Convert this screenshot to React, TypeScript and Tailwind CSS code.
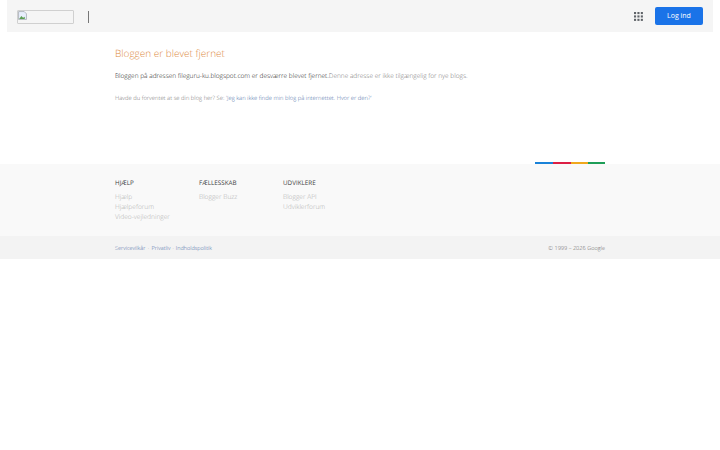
import React from "react";

const GridIcon = () => (
  <svg width="9" height="9" viewBox="0 0 9 9" fill="#5f6368">
    {[0, 3.4, 6.8].map((y) =>
      [0, 3.4, 6.8].map((x) => <rect key={`${x}-${y}`} x={x} y={y} width="2.1" height="2.1" />)
    )}
  </svg>
);

const BrokenImage = () => (
  <svg width="9" height="9" viewBox="0 0 8 8" className="absolute left-0 top-0">
    <path d="M0.5 0.5H5.5L7.5 2.5V7.5H0.5Z" fill="#e8eefc" stroke="#9aa0a6" strokeWidth="0.6" />
    <path d="M1 7L3 4.5L4.5 6L6 5V7Z" fill="#5c9e52" />
  </svg>
);

const FooterCol = ({ title, links, width }: { title: string; links: string[]; width: string }) => (
  <div className={width}>
    <h3 className="text-[6.3px] leading-[10px] font-normal text-[#444] mb-[4px]">{title}</h3>
    {links.map((l) => (
      <p key={l} className="text-[6.6px] leading-[10px] text-[#b0b0b0]">{l}</p>
    ))}
  </div>
);

export default function App() {
  return (
    <div className="w-[720px] h-[450px] bg-white overflow-hidden font-['Open_Sans',sans-serif] font-light [text-rendering:geometricPrecision]">
      <div className="mx-[7px] h-8 bg-[#f5f5f5] flex items-center pl-[10px] pr-[10px]">
        <div className="relative mt-[2px] w-[57px] h-[14px] border border-[#d0d0d0] rounded-[1px]">
          <BrokenImage />
        </div>
        <div className="ml-[14px] mt-[2px] w-px h-[12px] bg-[#777]"></div>
        <div className="ml-auto mr-[12px] flex items-center"><GridIcon /></div>
        <button className="w-[48px] h-[18px] bg-[#1a73e8] rounded-[2px] text-white text-[7px] font-normal">Log ind</button>
      </div>

      <div className="pl-[115px] h-[132px] pt-[14px]">
        <h1 className="text-[10px] leading-[14px] font-light text-[#dd8a3f]">Bloggen er blevet fjernet</h1>
        <p className="mt-[11px] text-[6.5px] leading-[10px] whitespace-nowrap text-[#222]">
          Bloggen på adressen fileguru-ku.blogspot.com er desværre blevet fjernet.
          <span className="text-[#777]">Denne adresse er ikke tilgængelig for nye blogs.</span>
        </p>
        <p className="mt-[13px] text-[5.85px] leading-[8px] whitespace-nowrap text-[#777]">
          Havde du forventet at se din blog her? Se: <span className="text-[#4d6fa8]">'Jeg kan ikke finde min blog på internettet. Hvor er den?'</span>
        </p>
      </div>

      <div className="relative bg-[#f9f9f9] h-[72px] pl-[115px] pt-[14px] flex">
        <div className="absolute left-[535px] -top-[2px] w-[70px] h-[2px] flex">
          <div className="w-[18px] bg-[#1a82d8]"></div>
          <div className="w-[18px] bg-[#dc1f44]"></div>
          <div className="w-[17px] bg-[#f0a81d]"></div>
          <div className="w-[17px] bg-[#1e9e58]"></div>
        </div>
        <FooterCol title="HJÆLP" width="w-[84px]" links={["Hjælp", "Hjælpeforum", "Video-vejledninger"]} />
        <FooterCol title="FÆLLESSKAB" width="w-[84px]" links={["Blogger Buzz"]} />
        <FooterCol title="UDVIKLERE" width="w-[84px]" links={["Blogger API", "Udviklerforum"]} />
      </div>

      <div className="bg-[#f3f3f3] h-[23px] pl-[115px] pr-[115px] pt-[2px] flex items-center text-[5.5px]">
        <span className="text-[#4d6fa8]">Servicevilkår</span>
        <span className="text-[#999] mx-[2.5px]">·</span>
        <span className="text-[#4d6fa8]">Privatliv</span>
        <span className="text-[#999] mx-[2px]">·</span>
        <span className="text-[#4d6fa8]">Indholdspolitik</span>
        <span className="ml-auto text-[#666] text-[5.6px]">© 1999 – 2026 Google</span>
      </div>
    </div>
  );
}
